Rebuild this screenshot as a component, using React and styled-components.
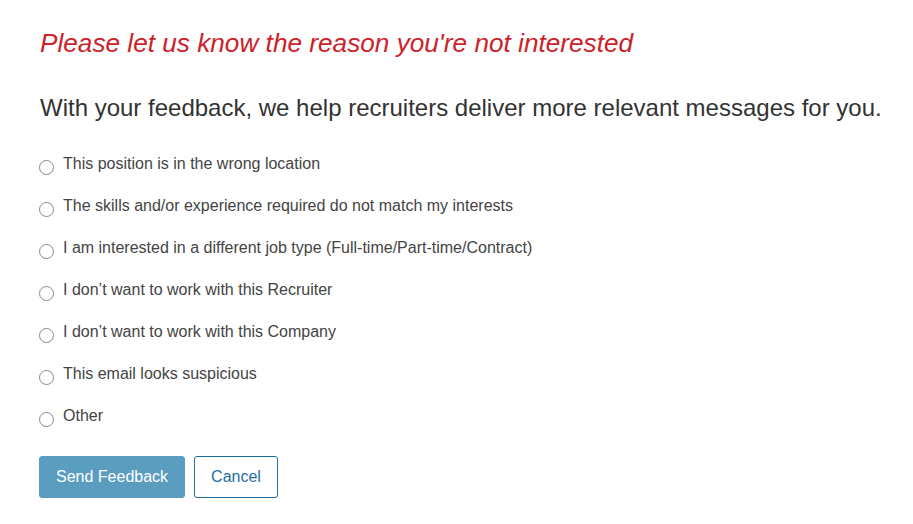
import React, { useState } from "react";
import styled, { createGlobalStyle } from "styled-components";

const GlobalStyle = createGlobalStyle`
  body {
    margin: 0;
    background: #fff;
    font-family: "Liberation Sans", Arial, sans-serif;
  }
`;

const StPage = styled.div`
  padding: 25px 0 0 40px;
`;

const StTitle = styled.h1`
  margin: 0;
  font-size: 26.2px;
  font-weight: normal;
  font-style: italic;
  color: #cc2229;
  line-height: 36px;
`;

const StSubtitle = styled.h2`
  margin: 32px 0 0;
  font-size: 24px;
  font-weight: normal;
  color: #333;
  line-height: 30px;
`;

const StList = styled.div`
  display: flex;
  flex-direction: column;
  gap: 16px;
  margin-top: 28px;
`;

const StOption = styled.label`
  display: flex;
  align-items: center;
  gap: 9px;
  height: 26px;
  font-size: 16px;
  color: #444;
  cursor: pointer;
`;

const StRadio = styled.span`
  width: 15px;
  height: 15px;
  box-sizing: border-box;
  border: 1px solid #8a8a8a;
  border-radius: 50%;
  margin-top: 6px;
  margin-left: -1px;
  flex-shrink: 0;
  display: flex;
  align-items: center;
  justify-content: center;
  &::after {
    content: "";
    width: 7px;
    height: 7px;
    border-radius: 50%;
    background: ${({ $checked }) => ($checked ? "#333" : "transparent")};
  }
`;

const StActions = styled.div`
  display: flex;
  gap: 9px;
  margin-top: 27px;
  margin-left: -1px;
`;

const StButton = styled.button`
  height: 42px;
  padding: 0 16px;
  font-family: "Liberation Sans", Arial, sans-serif;
  font-size: 16px;
  border-radius: 3px;
  cursor: pointer;
  border: 1px solid ${({ $primary }) => ($primary ? "#5b9dbf" : "#1f6ea1")};
  background: ${({ $primary }) => ($primary ? "#5b9dbf" : "#fff")};
  color: ${({ $primary }) => ($primary ? "#fff" : "#1f6ea1")};
`;

const reasons = [
  "This position is in the wrong location",
  "The skills and/or experience required do not match my interests",
  "I am interested in a different job type (Full-time/Part-time/Contract)",
  "I don\u2019t want to work with this Recruiter",
  "I don\u2019t want to work with this Company",
  "This email looks suspicious",
  "Other",
];

export default function App() {
  const [selected, setSelected] = useState(null);

  return (
    <>
      <GlobalStyle />
      <StPage>
        <StTitle>Please let us know the reason you're not interested</StTitle>
        <StSubtitle>With your feedback, we help recruiters deliver more relevant messages for you.</StSubtitle>

        {/* 이유 선택 */}
        <StList>
          {reasons.map((reason, i) => (
            <StOption key={reason} onClick={() => setSelected(i)}>
              <StRadio $checked={selected === i} />
              {reason}
            </StOption>
          ))}
        </StList>

        <StActions>
          <StButton $primary>Send Feedback</StButton>
          <StButton>Cancel</StButton>
        </StActions>
      </StPage>
    </>
  );
}
